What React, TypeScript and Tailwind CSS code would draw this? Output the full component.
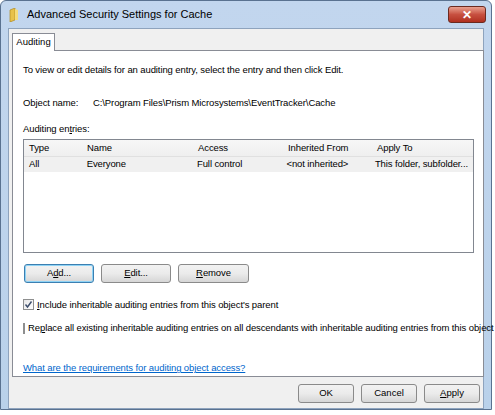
import React from "react";

const Btn = ({ children, w, focus }: { children: React.ReactNode; w: string; focus?: boolean }) => (
  <div className={`${w} h-[19px] shrink-0 flex items-center justify-center rounded-[3px] border ${focus ? "border-[#3c7fb1] shadow-[inset_0_0_0_1px_#8fd3f5]" : "border-[#8a8a8a]"} bg-gradient-to-b from-[#f2f2f2] via-[#ebebeb] to-[#d6d6d6] text-[9.5px] text-black`}>
    {children}
  </div>
);

export default function App() {
  const cols = ["w-[58px]", "w-[111px]", "w-[90px]", "w-[89px]", "flex-1"];
  return (
    <div className="w-[495px] h-[415px] bg-white" style={{ fontFamily: '"Liberation Sans", Arial, sans-serif' }}>
      <div className="w-[492px] h-[410px] bg-gradient-to-b from-[#c2d6ee] to-[#b9d1ea] rounded-t-[6px] border border-[#5a7290] flex flex-col px-[7px]">
        <div className="h-[27px] shrink-0 flex items-center gap-[8px] pl-[1px]">
          <svg width="10" height="14" viewBox="0 0 10 14">
            <path d="M1 2 L6 0 L6 12 L1 14 Z" fill="#e8c24a" stroke="#b08a20" strokeWidth="0.7" />
            <path d="M6 1 L9 2 L9 12 L6 12 Z" fill="#f5dc7a" />
          </svg>
          <span className="text-[11px] text-black">Advanced Security Settings for Cache</span>
          <div className="ml-auto mr-[-2px] w-[38px] h-[17px] rounded-[3px] border border-[#6b2a20] bg-gradient-to-b from-[#e8a090] via-[#c75040] to-[#b03020] flex items-center justify-center text-white text-[12px] font-bold">✕</div>
        </div>
        <div className="flex-1 bg-[#f0f0f0] border border-[#8ea3bd] flex flex-col px-[3px] pt-[4px]">
          <div className="h-[17px] shrink-0 flex">
            <div className="w-[43px] h-[18px] bg-white border border-b-0 border-[#898c95] text-[9.5px] flex items-center justify-center relative z-10">Auditing</div>
          </div>
          <div className="w-[472px] h-[327px] shrink-0 bg-white border border-[#898c95] text-[9.5px] tracking-[-0.1px] whitespace-nowrap text-black px-[10px] flex flex-col">
            <div className="mt-[12px] shrink-0">To view or edit details for an auditing entry, select the entry and then click Edit.</div>
            <div className="mt-[19px] shrink-0 flex"><span className="w-[70px]">Object name:</span><span>C:\Program Files\Prism Microsystems\EventTracker\Cache</span></div>
            <div className="mt-[11px] shrink-0">Auditing en<u>t</u>ries:</div>
            <div className="mt-[3px] w-[451px] h-[114px] shrink-0 border border-[#828790] bg-white">
              <div className="h-[17px] flex items-center bg-gradient-to-b from-[#f7f7f7] to-[#efefef] border-b border-[#e0e0e0] px-[5px]">
                {["Type", "Name", "Access", "Inherited From", "Apply To"].map((t, i) => (
                  <span key={t} className={cols[i]}>{t}</span>
                ))}
              </div>
              <div className="h-[15px] flex items-center bg-[#f0f0f0] px-[5px]">
                {["All", "Everyone", "Full control", "<not inherited>", "This folder, subfolder..."].map((t, i) => (
                  <span key={t} className={cols[i]}>{t}</span>
                ))}
              </div>
            </div>
            <div className="mt-[11px] shrink-0 flex gap-[7px] pl-[1px]">
              <Btn w="w-[70px]" focus>A<u>d</u>d...</Btn>
              <Btn w="w-[70px]"><u>E</u>dit...</Btn>
              <Btn w="w-[71px]"><u>R</u>emove</Btn>
            </div>
            <div className="mt-[15px] shrink-0 flex items-center gap-[3px]">
              <div className="w-[11px] h-[11px] border border-[#8e8f8f] bg-gradient-to-br from-[#e6e6e6] to-white flex items-center justify-center">
                <svg width="9" height="9" viewBox="0 0 9 9"><path d="M1.5 4.5 L3.5 7 L7.5 1.5" stroke="#3c4d6b" strokeWidth="1.4" fill="none" /></svg>
              </div>
              <span><u>I</u>nclude inheritable auditing entries from this object's parent</span>
            </div>
            <div className="mt-[9px] shrink-0 flex items-center gap-[3px]">
              <div className="w-[11px] h-[11px] border border-[#8e8f8f] bg-gradient-to-br from-[#e6e6e6] to-white" />
              <span>Re<u>p</u>lace all existing inheritable auditing entries on all descendants with inheritable auditing entries from this object</span>
            </div>
            <div className="mt-[26px] shrink-0 text-[#0066cc] underline">What are the requirements for auditing object access?</div>
          </div>
          <div className="mt-[7px] flex justify-end gap-[7px]">
            <Btn w="w-[56px]">OK</Btn>
            <Btn w="w-[56px]">Cancel</Btn>
            <Btn w="w-[56px]"><u>A</u>pply</Btn>
          </div>
        </div>
      </div>
    </div>
  );
}
